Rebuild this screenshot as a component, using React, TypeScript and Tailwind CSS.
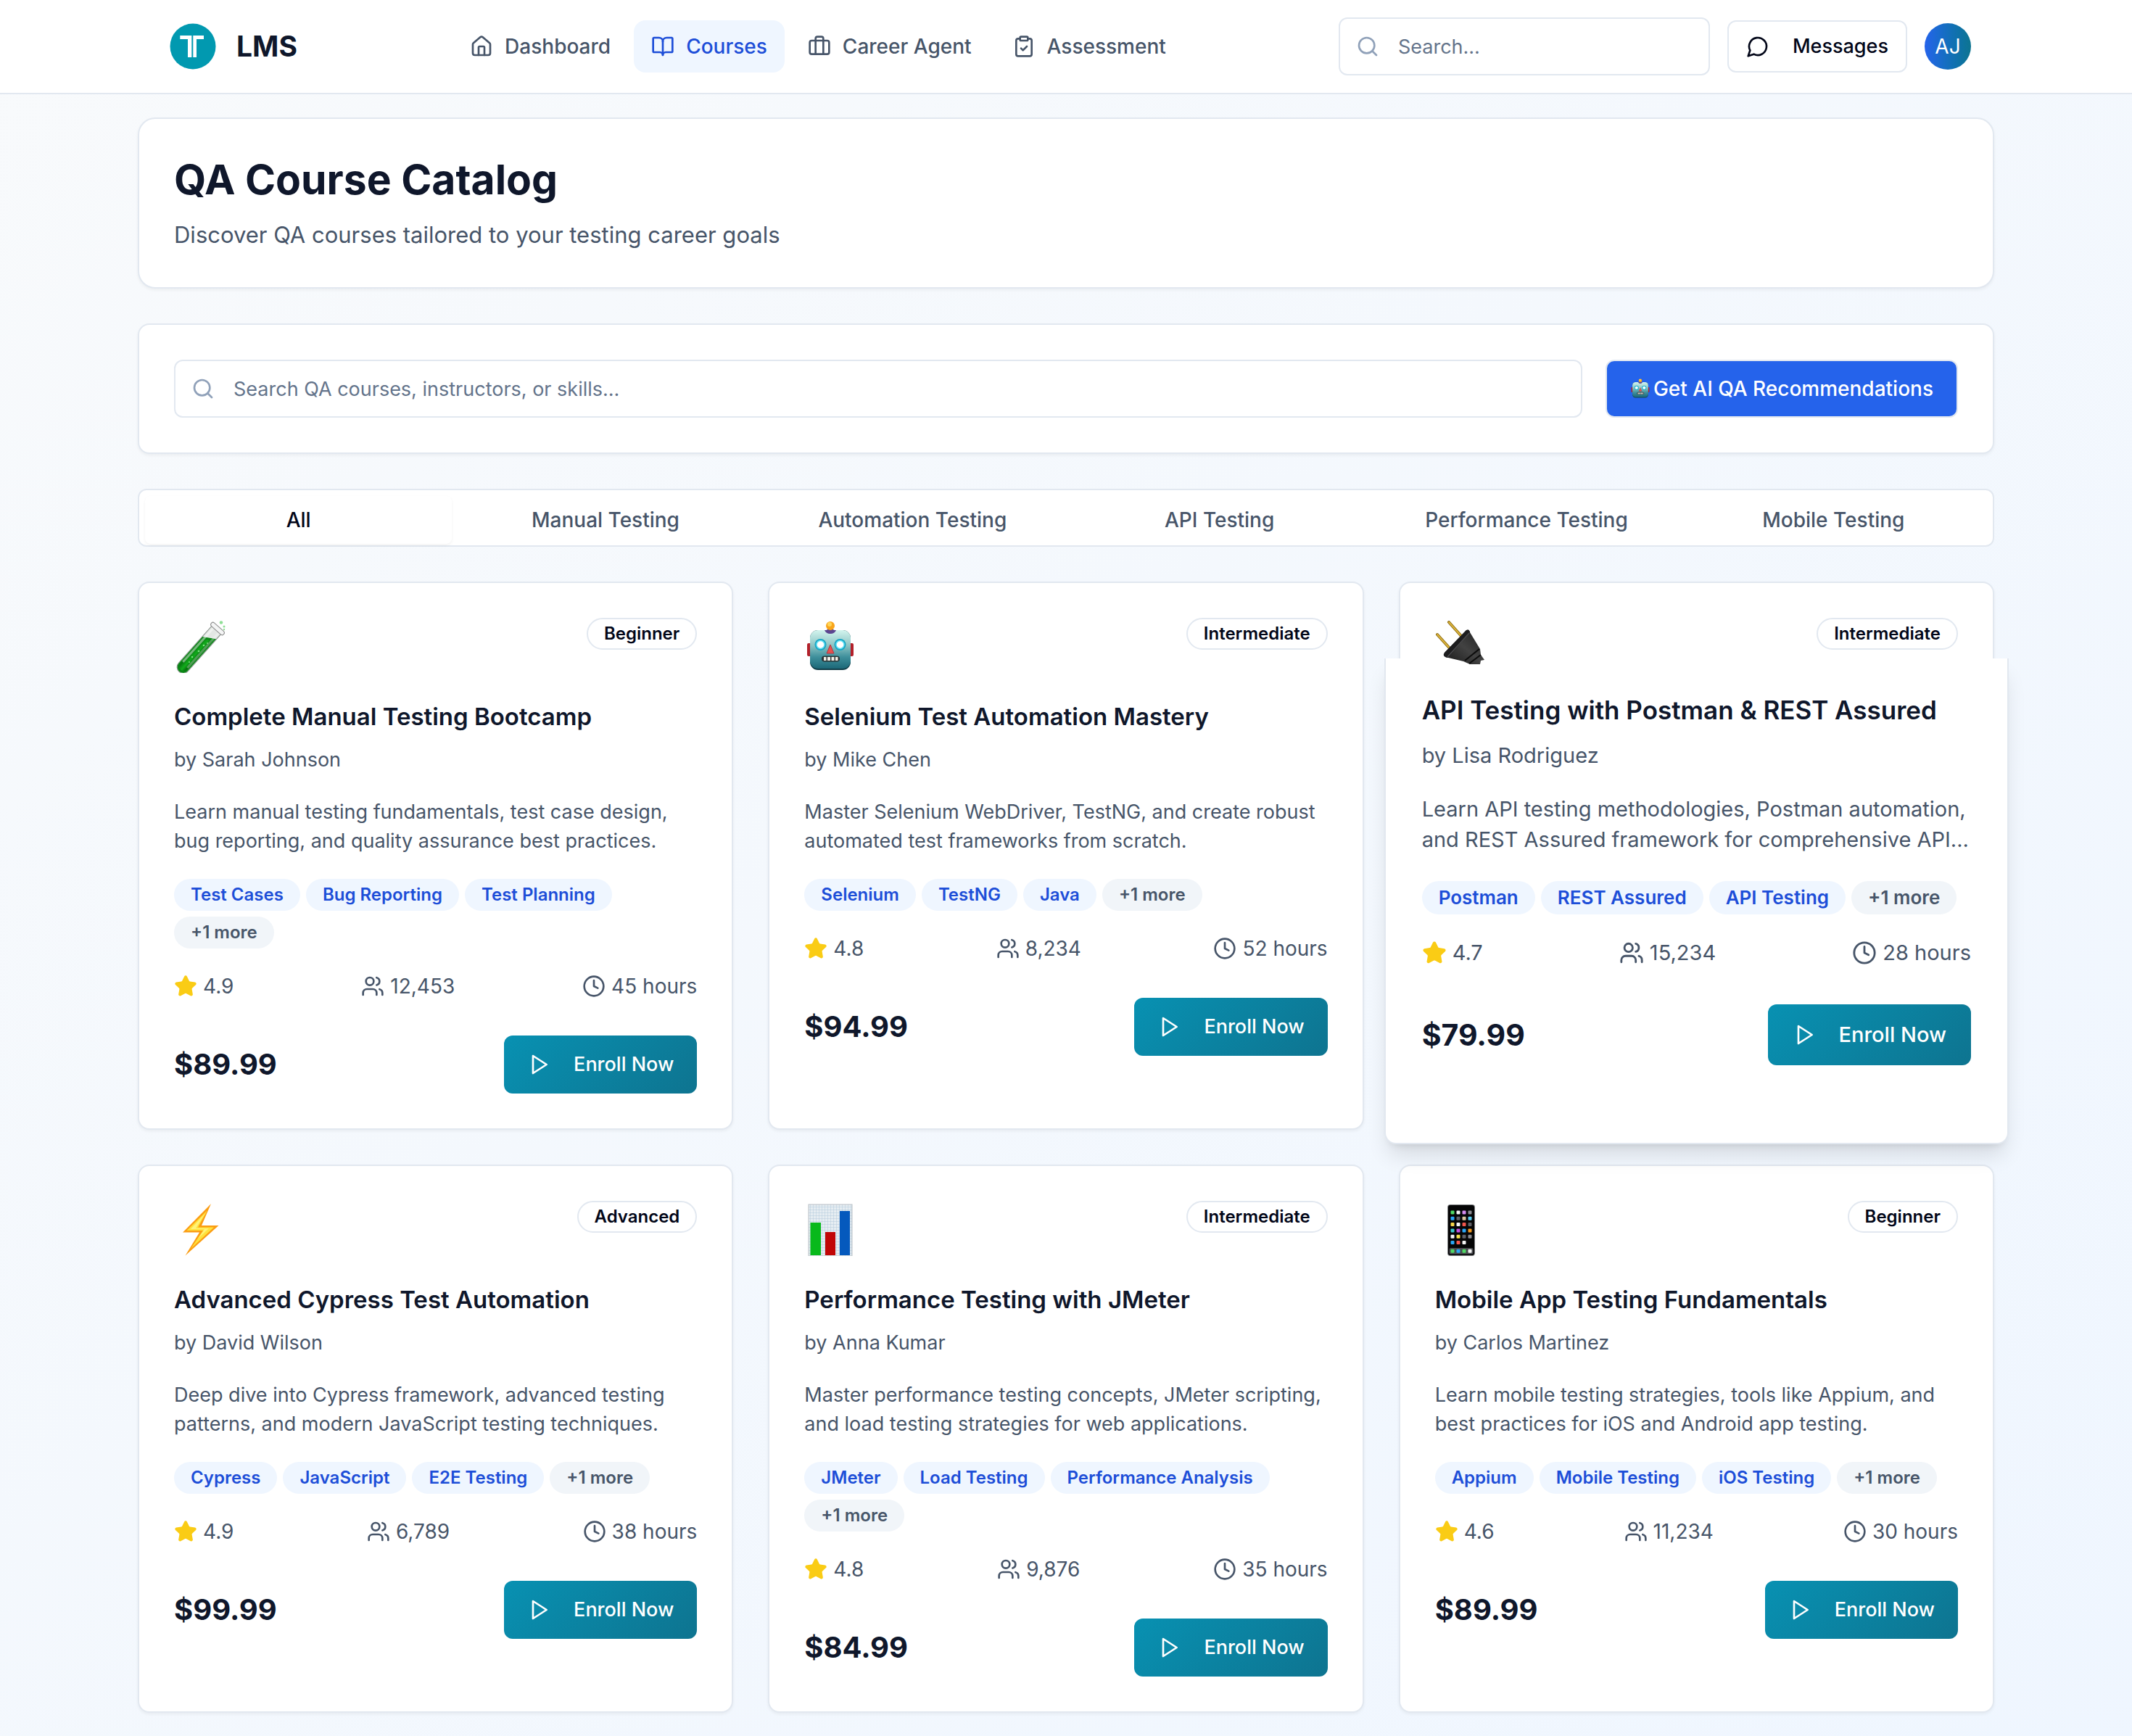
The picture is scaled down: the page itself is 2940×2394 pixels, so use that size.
import type { ReactNode } from "react";
import { BookOpen, Briefcase, ClipboardCheck, Clock, House, Search, Star, Users } from "lucide-react";

type Course = {
  icon: ReactNode;
  level: string;
  title: string;
  author: string;
  description: string;
  skills: string[];
  rating: string;
  students: string;
  hours: string;
  price: string;
};

function Logo() {
  return (
    <svg viewBox="0 0 64 64" className="size-16" aria-hidden="true">
      <circle cx="32" cy="32" r="31.5" fill="#0199b0" />
      <path d="M14.3 17H30.3V47H25V22H14.3ZM32.3 17H47V22H37V47H32.3Z" fill="#fff" />
    </svg>
  );
}

function MessageIcon() {
  return (
    <svg viewBox="0 0 24 24" className="size-8" fill="none" stroke="currentColor" strokeWidth="2" strokeLinecap="round" strokeLinejoin="round" aria-hidden="true">
      <path d="M7.9 20A9 9 0 1 0 4 16.1L2 22Z" />
    </svg>
  );
}

function PlayIcon() {
  return (
    <svg viewBox="0 0 24 24" className="size-8" fill="none" stroke="currentColor" strokeWidth="2" strokeLinecap="round" strokeLinejoin="round" aria-hidden="true">
      <polygon points="6 3 20 12 6 21 6 3" />
    </svg>
  );
}

function TestTube() {
  return (
    <svg viewBox="0 0 72 72" className="size-[72px]" aria-hidden="true">
      <defs>
        <linearGradient id="tube-liquid" x1="0" y1="0" x2="1" y2="0">
          <stop offset="0" stopColor="#067010" />
          <stop offset=".55" stopColor="#12ad1c" />
          <stop offset="1" stopColor="#05610c" />
        </linearGradient>
      </defs>
      <g transform="translate(60 11) rotate(41.8)">
        <path d="M-8.500 0H8.500V71a8.500 8.500 0 0 1-17 0z" fill="#e3e7e4" stroke="#87908a" strokeWidth="1" />
        <path d="M-8 22L8 12V71a8 8 0 0 1-16 0z" fill="#0b8516" />
        <path d="M-6 24L6 17V70a6 6 0 0 1-12 0z" fill="url(#tube-liquid)" />
        <path d="M3.500 4h3v64h-3z" fill="#fff" opacity=".3" />
        <path d="M-6.500 4h3v62h-3z" fill="#fff" opacity=".45" />
        <rect x="-11.500" y="-3" width="23" height="6" rx="3" fill="#f4f5f5" stroke="#8d8d8d" strokeWidth="1" />
      </g>
      <g fill="#7be07f">
        <circle cx="34" cy="42" r="1.300" />
        <circle cx="41" cy="34" r="1.300" />
        <circle cx="25" cy="50" r="1.200" />
        <circle cx="46" cy="31" r="1" />
        <circle cx="21" cy="57" r="1" />
      </g>
      <g fill="#8fdf96">
        <circle cx="65" cy="2.500" r="2.300" />
        <circle cx="69" cy="8" r="1.500" />
        <circle cx="69" cy="12" r="1.200" />
      </g>
    </svg>
  );
}

function Robot({ id, className }: { id: string; className: string }) {
  return (
    <svg viewBox="0 0 72 72" className={className} aria-hidden="true">
      <defs>
        <linearGradient id={id} x1="0" y1="0" x2="0" y2="1">
          <stop offset="0" stopColor="#d3f4ee" />
          <stop offset=".4" stopColor="#8cc4c4" />
          <stop offset=".7" stopColor="#3e8f9b" />
          <stop offset="1" stopColor="#1c6878" />
        </linearGradient>
      </defs>
      <rect x="4" y="31" width="6" height="18" rx="2" fill="#b3202a" />
      <rect x="62" y="31" width="6" height="18" rx="2" fill="#b3202a" />
      <path d="M28 15q8-8 16 0v2H28z" fill="#5b4590" />
      <circle cx="36" cy="7" r="6" fill="#f9a51b" />
      <circle cx="35" cy="5" r="3" fill="#ffd65a" />
      <rect x="8" y="13" width="56" height="55" rx="11" fill="#123f4a" />
      <rect x="8" y="13" width="56" height="53" rx="11" fill={`url(#${id})`} />
      <path d="M28 13h16q-2 5-8 5t-8-5z" fill="#5b4590" />
      <circle cx="22.500" cy="33" r="8" fill="#18a5c4" />
      <circle cx="22.500" cy="33" r="5.500" fill="#fff" stroke="#5fe1f5" strokeWidth="1.500" />
      <circle cx="49.500" cy="33" r="8" fill="#18a5c4" />
      <circle cx="49.500" cy="33" r="5.500" fill="#fff" stroke="#5fe1f5" strokeWidth="1.500" />
      <path d="M36 33l5 12H31z" fill="#e8514f" stroke="#b23640" strokeWidth="1" />
      <rect x="24" y="48.500" width="25" height="8" rx="4" fill="#2b3436" />
      <path d="M27 50h3.500v5H27zM32 50h4v5h-4zM37.500 50h4v5h-4zM43 50h3.500v5H43z" fill="#f2efe6" />
    </svg>
  );
}

function Plug() {
  return (
    <svg viewBox="0 0 72 60" className="h-[60px] w-[72px]" aria-hidden="true">
      <defs>
        <linearGradient id="plug-body" x1="0" y1="1" x2="1" y2="0">
          <stop offset="0" stopColor="#151515" />
          <stop offset=".5" stopColor="#424242" />
          <stop offset="1" stopColor="#1c1c1c" />
        </linearGradient>
      </defs>
      <path d="M19 2L36 21M3 19L21 39" stroke="#8a6a12" strokeWidth="4" strokeLinecap="round" />
      <path d="M19 2L36 21M3 19L21 39" stroke="#dcb43c" strokeWidth="2" strokeLinecap="round" />
      <path d="M43 13q4-2 5 3l14 23 1 8 5 7-5 1-1 5H48l-9-4-25-6q-4-2-1-6z" fill="url(#plug-body)" />
      <path d="M43 13q4-2 5 3L18 51q-7 0-5-7z" fill="#1d1d1f" />
      <path d="M41 55l20-16M47 59l16-12" stroke="#0c0c0c" strokeWidth="2" />
      <path d="M47 17L17 50" stroke="#4b4b4d" strokeWidth="1.500" />
    </svg>
  );
}

function Bolt() {
  return (
    <svg viewBox="0 0 72 72" className="size-[72px]" aria-hidden="true">
      <path d="M51 0L12 39.500h23L15.500 71.500 61.500 30H38z" fill="#fb9d14" />
      <path d="M46 9L17.500 37H40L23 62l32-29.500H33z" fill="#ffe23c" />
      <path d="M43 13L23 35h19l-9 13 15-14H30z" fill="#fff27a" />
    </svg>
  );
}

function BarChart() {
  return (
    <svg viewBox="0 0 72 72" className="size-[72px]" aria-hidden="true">
      <defs>
        <pattern id="chart-grid" width="4" height="4" patternUnits="userSpaceOnUse">
          <rect width="4" height="4" fill="#e6edf2" />
          <path d="M0 0H4M0 0V4" stroke="#b5cbdc" strokeWidth="1" />
        </pattern>
      </defs>
      <rect x="6" y="1" width="60" height="71" fill="url(#chart-grid)" stroke="#b9c0c5" strokeWidth="1" />
      <rect x="8.500" y="26" width="14.500" height="45" fill="#08b91b" />
      <rect x="29" y="39" width="14" height="32" fill="#c10606" />
      <rect x="49" y="10" width="14" height="61" fill="#0559bd" />
    </svg>
  );
}

const appRows = [
  ["#4fd964", "#f3f3f3", "#d58df0", "#8c8c92"],
  ["#2aa6f5", "#5f6066", "#d9c7a0", "#58cdf2"],
  ["#f6d54a", "#f3f3f3", "#f2564c", "#5f6066"],
  ["#38c7ce", "#c34fe0", "#2aa6f5", "#f59a1f"],
  ["#f3f3f3", "#f6e04a", "#5f6066", "#8c8c92"],
  ["#2aa6f5", "#f2564c", "#f3f3f3"],
];

function Phone() {
  return (
    <svg viewBox="0 0 72 72" className="size-[72px]" aria-hidden="true">
      <rect x="17" y="1" width="38" height="71" rx="4" fill="#77797c" />
      <rect x="18" y="2" width="36" height="69" rx="3" fill="#050506" />
      {appRows.map((row, y) =>
        row.map((color, x) => (
          <rect key={`${y}-${x}`} x={21.5 + x * 8} y={9.5 + y * 8.3} width="5" height="5" rx="1" fill={color} />
        ))
      )}
      <rect x="19.500" y="61" width="33" height="8.500" rx="2" fill="#4a4b50" />
      {["#4fd964", "#2aa6f5", "#4fd964", "#f3f3f3"].map((color, x) => (
        <rect key={x} x={21.5 + x * 8} y="62.700" width="5" height="5" rx="1" fill={color} />
      ))}
    </svg>
  );
}

const courses: Course[] = [
  {
    icon: <TestTube />,
    level: "Beginner",
    title: "Complete Manual Testing Bootcamp",
    author: "Sarah Johnson",
    description: "Learn manual testing fundamentals, test case design, bug reporting, and quality assurance best practices.",
    skills: ["Test Cases", "Bug Reporting", "Test Planning"],
    rating: "4.9",
    students: "12,453",
    hours: "45 hours",
    price: "$89.99",
  },
  {
    icon: <Robot id="robot-large" className="size-[72px]" />,
    level: "Intermediate",
    title: "Selenium Test Automation Mastery",
    author: "Mike Chen",
    description: "Master Selenium WebDriver, TestNG, and create robust automated test frameworks from scratch.",
    skills: ["Selenium", "TestNG", "Java"],
    rating: "4.8",
    students: "8,234",
    hours: "52 hours",
    price: "$94.99",
  },
  {
    icon: <Plug />,
    level: "Intermediate",
    title: "API Testing with Postman & REST Assured",
    author: "Lisa Rodriguez",
    description: "Learn API testing methodologies, Postman automation, and REST Assured framework for comprehensive API...",
    skills: ["Postman", "REST Assured", "API Testing"],
    rating: "4.7",
    students: "15,234",
    hours: "28 hours",
    price: "$79.99",
  },
  {
    icon: <Bolt />,
    level: "Advanced",
    title: "Advanced Cypress Test Automation",
    author: "David Wilson",
    description: "Deep dive into Cypress framework, advanced testing patterns, and modern JavaScript testing techniques.",
    skills: ["Cypress", "JavaScript", "E2E Testing"],
    rating: "4.9",
    students: "6,789",
    hours: "38 hours",
    price: "$99.99",
  },
  {
    icon: <BarChart />,
    level: "Intermediate",
    title: "Performance Testing with JMeter",
    author: "Anna Kumar",
    description: "Master performance testing concepts, JMeter scripting, and load testing strategies for web applications.",
    skills: ["JMeter", "Load Testing", "Performance Analysis"],
    rating: "4.8",
    students: "9,876",
    hours: "35 hours",
    price: "$84.99",
  },
  {
    icon: <Phone />,
    level: "Beginner",
    title: "Mobile App Testing Fundamentals",
    author: "Carlos Martinez",
    description: "Learn mobile testing strategies, tools like Appium, and best practices for iOS and Android app testing.",
    skills: ["Appium", "Mobile Testing", "iOS Testing"],
    rating: "4.6",
    students: "11,234",
    hours: "30 hours",
    price: "$89.99",
  },
];

function CardTop({ course }: { course: Course }) {
  return (
    <div className="flex h-20 items-start justify-between">
      <div className="relative z-20 pt-1">{course.icon}</div>
      <span className="rounded-full border-2 border-slate-200 px-[22px] py-1 text-[24px] leading-8 font-semibold text-slate-950">
        {course.level}
      </span>
    </div>
  );
}

function CourseCard({ course }: { course: Course }) {
  return (
    <article className="rounded-2xl border-2 border-slate-200 bg-white p-12 shadow-[0_2px_4px_rgba(0,0,0,0.05)]">
      <CardTop course={course} />
      <h3 className="mt-8 text-[33px] leading-12 font-semibold text-slate-900">{course.title}</h3>
      <p className="mt-4 text-[27px] leading-10 text-[#475569]">by {course.author}</p>
      <p className="mt-8 text-[27px] leading-10 text-[#475569]">{course.description}</p>
      <ul className="mt-8 flex flex-wrap gap-2">
        {course.skills.map((skill) => (
          <li key={skill} className="rounded-full bg-[#eff6ff] px-[23px] py-1.5 text-[24px] leading-8 font-semibold text-[#1d4ed8]">
            {skill}
          </li>
        ))}
        <li className="rounded-full bg-slate-100 px-[23px] py-1.5 text-[24px] leading-8 font-semibold text-[#475569]">+1 more</li>
      </ul>
      <div className="mt-8 flex items-center justify-between text-[28px] leading-10 text-[#475569]">
        <span className="flex items-center gap-2">
          <Star className="size-8 fill-[#facc15] text-[#facc15]" />
          {course.rating}
        </span>
        <span className="flex items-center gap-2">
          <Users className="size-8" />
          {course.students}
        </span>
        <span className="flex items-center gap-2">
          <Clock className="size-8" />
          {course.hours}
        </span>
      </div>
      <div className="mt-12 flex items-center justify-between">
        <span className="text-[40px] leading-14 font-bold text-slate-900">{course.price}</span>
        <button
          type="button"
          className="flex h-20 items-center gap-8 rounded-xl bg-[linear-gradient(135deg,#0891b2,#0e7490)] px-8 text-[27px] leading-10 font-medium text-white"
        >
          <PlayIcon />
          Enroll Now
        </button>
      </div>
    </article>
  );
}

/* Card caught while it grows on hover: its lower part already stands larger over the resting card. */
function RaisedCourseCard({ course }: { course: Course }) {
  return (
    <article className="relative z-10 rounded-2xl border-2 border-slate-200 bg-white p-12 shadow-[0_2px_4px_rgba(0,0,0,0.05)]">
      <CardTop course={course} />
      <div className="absolute -inset-x-[22px] top-[104px] -bottom-[22px] rounded-b-2xl border-2 border-t-0 border-slate-200 bg-white px-[50px] pt-[45px] shadow-[0_20px_30px_-6px_rgba(0,0,0,0.12),0_8px_12px_-8px_rgba(0,0,0,0.12)] [clip-path:inset(0_-60px_-60px_-60px)]">
        <h3 className="text-[35px] leading-[52px] font-semibold text-slate-900">{course.title}</h3>
        <p className="mt-4 text-[29px] leading-[42px] text-[#475569]">by {course.author}</p>
        <p className="mt-8 text-[29px] leading-[42px] text-[#475569]">{course.description}</p>
        <ul className="mt-9 flex flex-wrap gap-2">
          {course.skills.map((skill) => (
            <li key={skill} className="rounded-full bg-[#eff6ff] px-[23px] py-1.5 text-[26px] leading-[34px] font-semibold text-[#1d4ed8]">
              {skill}
            </li>
          ))}
          <li className="rounded-full bg-slate-100 px-[23px] py-1.5 text-[26px] leading-[34px] font-semibold text-[#475569]">+1 more</li>
        </ul>
        <div className="mt-8 flex items-center justify-between text-[29px] leading-[42px] text-[#475569]">
          <span className="flex items-center gap-2">
            <Star className="size-[34px] fill-[#facc15] text-[#facc15]" />
            {course.rating}
          </span>
          <span className="flex items-center gap-2">
            <Users className="size-[34px]" />
            {course.students}
          </span>
          <span className="flex items-center gap-2">
            <Clock className="size-[34px]" />
            {course.hours}
          </span>
        </div>
        <div className="mt-[50px] flex items-center justify-between">
          <span className="text-[41px] leading-14 font-bold text-slate-900">{course.price}</span>
          <button
            type="button"
            className="flex h-[84px] items-center gap-8 rounded-xl bg-[linear-gradient(135deg,#0891b2,#0e7490)] px-[34px] text-[29px] leading-[42px] font-medium text-white"
          >
            <PlayIcon />
            Enroll Now
          </button>
        </div>
      </div>
    </article>
  );
}

const navItems = [
  { label: "Dashboard", Icon: House, active: false },
  { label: "Courses", Icon: BookOpen, active: true },
  { label: "Career Agent", Icon: Briefcase, active: false },
  { label: "Assessment", Icon: ClipboardCheck, active: false },
];

const tabs = ["All", "Manual Testing", "Automation Testing", "API Testing", "Performance Testing", "Mobile Testing"];

export default function App() {
  return (
    <div className="min-h-screen bg-linear-to-br from-slate-50 to-blue-50 font-['Inter',sans-serif]">
      <header className="border-b-2 border-slate-200 bg-white/95">
        <div className="mx-auto flex h-32 max-w-[2560px] items-center justify-between px-8">
          <a href="#home" className="flex items-center gap-7 pl-3">
            <Logo />
            <span className="text-[39px] leading-14 font-bold text-slate-900">LMS</span>
          </a>
          <nav className="flex gap-2">
            {navItems.map(({ label, Icon, active }) => (
              <a
                key={label}
                href={`#${label.toLowerCase().replace(" ", "-")}`}
                aria-current={active ? "page" : undefined}
                className={`flex items-center gap-4 rounded-2xl px-6 py-4 text-[28px] leading-10 font-medium whitespace-nowrap ${
                  active ? "bg-[#eff6ff] text-[#1d4ed8]" : "text-[#475569]"
                }`}
              >
                <Icon className="size-8" />
                {label}
              </a>
            ))}
          </nav>
          <div className="flex items-center gap-6">
            <div className="relative">
              <Search className="absolute top-6 left-6 size-8 text-slate-400" />
              <input
                type="search"
                aria-label="Search"
                placeholder="Search..."
                className="h-20 w-[512px] rounded-xl border-2 border-slate-200 bg-white pr-6 pl-20 text-[27px] placeholder:text-[#64748b]"
              />
            </div>
            <button
              type="button"
              className="flex h-[72px] items-center gap-8 rounded-xl border-2 border-slate-200 bg-white px-6 text-[27px] leading-10 font-medium text-slate-950"
            >
              <MessageIcon />
              Messages
            </button>
            <button
              type="button"
              aria-label="Account of AJ"
              className="flex size-16 items-center justify-center rounded-full bg-linear-to-r from-[#2563eb] to-[#0e7490] text-[28px] text-white"
            >
              AJ
            </button>
          </div>
        </div>
      </header>

      <main className="mx-auto flex max-w-[2560px] flex-col gap-12 py-8">
        <section className="rounded-3xl border-2 border-slate-200 bg-white p-12 shadow-[0_2px_4px_rgba(0,0,0,0.05)]">
          <h1 className="text-[57px] leading-[72px] font-bold text-slate-900">QA Course Catalog</h1>
          <p className="mt-4 text-[31px] leading-12 text-[#475569]">Discover QA courses tailored to your testing career goals</p>
        </section>

        <section className="flex gap-8 rounded-2xl border-2 border-slate-200 bg-white p-12 shadow-[0_2px_4px_rgba(0,0,0,0.05)]">
          <div className="relative flex-1">
            <Search className="absolute top-6 left-6 size-8 text-slate-400" />
            <input
              type="search"
              aria-label="Search courses"
              placeholder="Search QA courses, instructors, or skills..."
              className="h-20 w-full rounded-xl border-2 border-slate-200 bg-white pr-6 pl-20 text-[27px] placeholder:text-[#64748b]"
            />
          </div>
          <button
            type="button"
            className="flex h-20 items-center gap-1 rounded-xl border-2 border-slate-200 bg-[#2563eb] px-8 text-[28px] leading-10 font-medium text-white"
          >
            <Robot id="robot-small" className="size-7" />
            Get AI QA Recommendations
          </button>
        </section>

        <div role="tablist" className="grid h-20 grid-cols-6 rounded-xl border-2 border-slate-200 bg-white px-2 pt-2 pb-0.5">
          {tabs.map((tab, i) => (
            <button
              key={tab}
              type="button"
              role="tab"
              aria-selected={i === 0}
              className={`rounded-lg text-[28px] leading-10 font-medium ${
                i === 0 ? "bg-white text-slate-950 shadow-[0_2px_4px_rgba(0,0,0,0.05)]" : "text-[#475569]"
              }`}
            >
              {tab}
            </button>
          ))}
        </div>

        <div className="grid grid-cols-3 gap-12">
          {courses.map((course, i) =>
            i === 2 ? <RaisedCourseCard key={course.title} course={course} /> : <CourseCard key={course.title} course={course} />
          )}
        </div>
      </main>
    </div>
  );
}
